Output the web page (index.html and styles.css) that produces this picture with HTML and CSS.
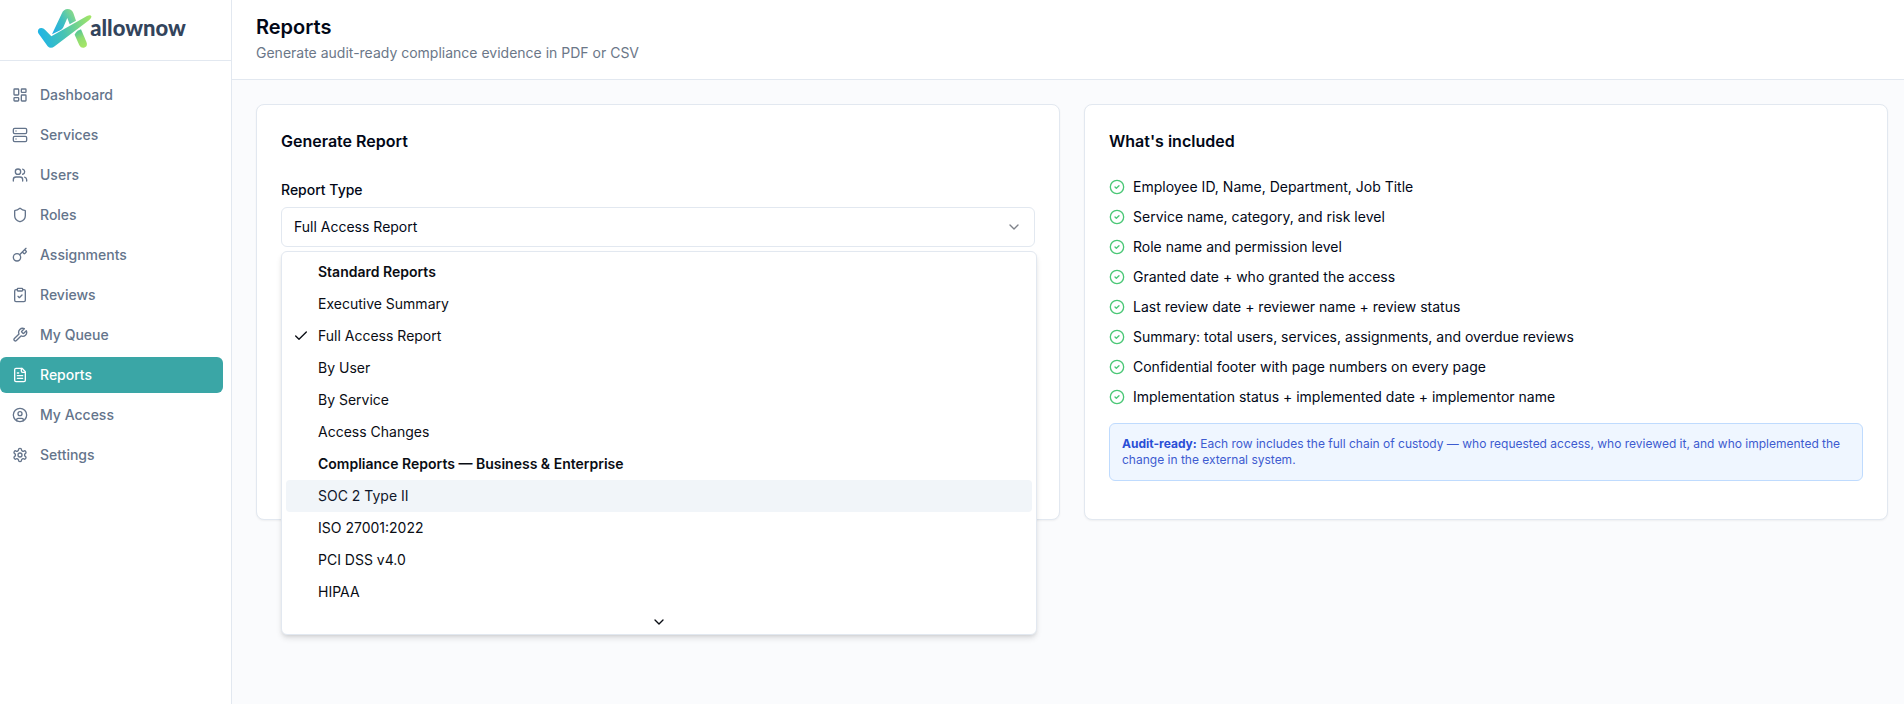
FILE: index.html
```html
<!DOCTYPE html>
<html lang="en">
<head>
<meta charset="utf-8">
<meta name="viewport" content="width=device-width, initial-scale=1">
<title>Reports - allownow</title>
<link rel="stylesheet" href="styles.css">
</head>
<body>
<svg class="defs" width="0" height="0" aria-hidden="true">
  <symbol id="circle-check" viewBox="0 0 24 24"><circle cx="12" cy="12" r="10"/><path d="m9 12 2 2 4-4"/></symbol>
</svg>
<div class="app">
  <aside class="sidebar">
    <a class="brand" href="#">
      <svg class="brand-mark" viewBox="108 24 168 123" aria-hidden="true">
        <defs>
          <linearGradient id="sweep" gradientUnits="userSpaceOnUse" x1="112" y1="100" x2="270" y2="60">
            <stop offset="0" stop-color="#1fb4e6"/><stop offset=".45" stop-color="#46c3b4"/><stop offset="1" stop-color="#a2e566"/>
          </linearGradient>
          <linearGradient id="peak" gradientUnits="userSpaceOnUse" x1="155" y1="90" x2="224" y2="50">
            <stop offset="0" stop-color="#22aee6"/><stop offset=".5" stop-color="#3fbfc0"/><stop offset="1" stop-color="#86d98a"/>
          </linearGradient>
          <linearGradient id="leg" gradientUnits="userSpaceOnUse" x1="225" y1="92" x2="250" y2="140">
            <stop offset="0" stop-color="#4cc49c"/><stop offset=".5" stop-color="#8fdc72"/><stop offset="1" stop-color="#a6e667"/>
          </linearGradient>
        </defs>
        <path fill="url(#peak)" d="M153 103 182 41Q188 27 200 27 212 27 217 39L225 62 206 73 199 54 187 82Q184 88 178 91Z"/>
        <path fill="url(#sweep)" d="M112 100Q108 90 116 85 125 81 132 89L151 109 258 48Q269 43 271 49 273 53 264 61L161 139Q149 148 140 139Z"/>
        <path fill="url(#leg)" d="M221 104Q225 94 240 88L256 125Q261 137 252 142 241 147 235 136Z"/>
      </svg>
      <span class="brand-name">allownow</span>
    </a>
    <nav class="nav" aria-label="Main">
      <a class="nav-link" href="#"><svg class="icon" viewBox="0 0 24 24"><rect width="7" height="9" x="3" y="3" rx="1"/><rect width="7" height="5" x="14" y="3" rx="1"/><rect width="7" height="9" x="14" y="12" rx="1"/><rect width="7" height="5" x="3" y="16" rx="1"/></svg>Dashboard</a>
      <a class="nav-link" href="#"><svg class="icon" viewBox="0 0 24 24"><rect width="20" height="8" x="2" y="2" rx="2"/><rect width="20" height="8" x="2" y="14" rx="2"/><path d="M6 6h.01M6 18h.01"/></svg>Services</a>
      <a class="nav-link" href="#"><svg class="icon" viewBox="0 0 24 24"><path d="M16 21v-2a4 4 0 0 0-4-4H6a4 4 0 0 0-4 4v2"/><circle cx="9" cy="7" r="4"/><path d="M22 21v-2a4 4 0 0 0-3-3.87M16 3.13a4 4 0 0 1 0 7.75"/></svg>Users</a>
      <a class="nav-link" href="#"><svg class="icon" viewBox="0 0 24 24"><path d="M20 13c0 5-3.5 7.5-7.66 8.95a1 1 0 0 1-.67-.01C7.5 20.5 4 18 4 13V6a1 1 0 0 1 1-1c2 0 4.5-1.2 6.24-2.72a1.17 1.17 0 0 1 1.52 0C14.51 3.81 17 5 19 5a1 1 0 0 1 1 1z"/></svg>Roles</a>
      <a class="nav-link" href="#"><svg class="icon" viewBox="0 0 24 24"><path d="m15.5 7.5 2.3 2.3a1 1 0 0 0 1.4 0l2.1-2.1a1 1 0 0 0 0-1.4L19 4M21 2l-9.6 9.6"/><circle cx="7.5" cy="15.5" r="5.5"/></svg>Assignments</a>
      <a class="nav-link" href="#"><svg class="icon" viewBox="0 0 24 24"><rect width="8" height="4" x="8" y="2" rx="1"/><path d="M16 4h2a2 2 0 0 1 2 2v14a2 2 0 0 1-2 2H6a2 2 0 0 1-2-2V6a2 2 0 0 1 2-2h2"/><path d="m9 14 2 2 4-4"/></svg>Reviews</a>
      <a class="nav-link" href="#"><svg class="icon" viewBox="0 0 24 24"><path d="M14.7 6.3a1 1 0 0 0 0 1.4l1.6 1.6a1 1 0 0 0 1.4 0l3.77-3.77a6 6 0 0 1-7.94 7.94l-6.91 6.91a2.12 2.12 0 0 1-3-3l6.91-6.91a6 6 0 0 1 7.94-7.94l-3.76 3.76z"/></svg>My Queue</a>
      <a class="nav-link active" href="#" aria-current="page"><svg class="icon" viewBox="0 0 24 24"><path d="M15 2H6a2 2 0 0 0-2 2v16a2 2 0 0 0 2 2h12a2 2 0 0 0 2-2V7Z"/><path d="M14 2v4a2 2 0 0 0 2 2h4M10 9H8M16 13H8M16 17H8"/></svg>Reports</a>
      <a class="nav-link" href="#"><svg class="icon" viewBox="0 0 24 24"><circle cx="12" cy="12" r="10"/><circle cx="12" cy="10" r="3"/><path d="M7 20.662V19a2 2 0 0 1 2-2h6a2 2 0 0 1 2 2v1.662"/></svg>My Access</a>
      <a class="nav-link" href="#"><svg class="icon" viewBox="0 0 24 24"><path d="M12.22 2h-.44a2 2 0 0 0-2 2v.18a2 2 0 0 1-1 1.73l-.43.25a2 2 0 0 1-2 0l-.15-.08a2 2 0 0 0-2.73.73l-.22.38a2 2 0 0 0 .73 2.73l.15.1a2 2 0 0 1 1 1.72v.51a2 2 0 0 1-1 1.74l-.15.09a2 2 0 0 0-.73 2.73l.22.38a2 2 0 0 0 2.73.73l.15-.08a2 2 0 0 1 2 0l.43.25a2 2 0 0 1 1 1.73V20a2 2 0 0 0 2 2h.44a2 2 0 0 0 2-2v-.18a2 2 0 0 1 1-1.73l.43-.25a2 2 0 0 1 2 0l.15.08a2 2 0 0 0 2.73-.73l.22-.39a2 2 0 0 0-.73-2.73l-.15-.08a2 2 0 0 1-1-1.74v-.5a2 2 0 0 1 1-1.74l.15-.09a2 2 0 0 0 .73-2.73l-.22-.38a2 2 0 0 0-2.73-.73l-.15.08a2 2 0 0 1-2 0l-.43-.25a2 2 0 0 1-1-1.73V4a2 2 0 0 0-2-2z"/><circle cx="12" cy="12" r="3"/></svg>Settings</a>
    </nav>
  </aside>

  <div class="page">
    <header class="page-header">
      <h1>Reports</h1>
      <p>Generate audit-ready compliance evidence in PDF or CSV</p>
    </header>
    <main class="content">
      <section class="card">
        <h2>Generate Report</h2>
        <div class="field">
          <label for="report-type">Report Type</label>
          <div class="select">
            <select id="report-type">
              <option>Executive Summary</option>
              <option selected>Full Access Report</option>
              <option>By User</option>
              <option>By Service</option>
              <option>Access Changes</option>
              <option>SOC 2 Type II</option>
              <option>ISO 27001:2022</option>
              <option>PCI DSS v4.0</option>
              <option>HIPAA</option>
            </select>
            <svg class="icon select-arrow" viewBox="0 0 24 24"><path d="m6 9 6 6 6-6"/></svg>
            <div class="menu">
              <div class="menu-list" role="listbox" aria-label="Report Type">
                <div class="menu-label">Standard Reports</div>
                <div class="menu-item" role="option">Executive Summary</div>
                <div class="menu-item" role="option" aria-selected="true"><span class="menu-tick"><svg class="icon" viewBox="0 0 24 24"><path d="M20 6 9 17l-5-5"/></svg></span>Full Access Report</div>
                <div class="menu-item" role="option">By User</div>
                <div class="menu-item" role="option">By Service</div>
                <div class="menu-item" role="option">Access Changes</div>
                <div class="menu-label">Compliance Reports — Business &amp; Enterprise</div>
                <div class="menu-item highlighted" role="option">SOC 2 Type II</div>
                <div class="menu-item" role="option">ISO 27001:2022</div>
                <div class="menu-item" role="option">PCI DSS v4.0</div>
                <div class="menu-item" role="option">HIPAA</div>
              </div>
              <div class="menu-scroll"><svg class="icon" viewBox="0 0 24 24"><path d="m6 9 6 6 6-6"/></svg></div>
            </div>
          </div>
        </div>
      </section>

      <section class="card">
        <h2>What's included</h2>
        <ul class="included">
          <li><svg class="icon"><use href="#circle-check"/></svg>Employee ID, Name, Department, Job Title</li>
          <li><svg class="icon"><use href="#circle-check"/></svg>Service name, category, and risk level</li>
          <li><svg class="icon"><use href="#circle-check"/></svg>Role name and permission level</li>
          <li><svg class="icon"><use href="#circle-check"/></svg>Granted date + who granted the access</li>
          <li><svg class="icon"><use href="#circle-check"/></svg>Last review date + reviewer name + review status</li>
          <li><svg class="icon"><use href="#circle-check"/></svg>Summary: total users, services, assignments, and overdue reviews</li>
          <li><svg class="icon"><use href="#circle-check"/></svg>Confidential footer with page numbers on every page</li>
          <li><svg class="icon"><use href="#circle-check"/></svg>Implementation status + implemented date + implementor name</li>
        </ul>
        <p class="notice"><strong>Audit-ready:</strong> Each row includes the full chain of custody — who requested access, who reviewed it, and who implemented the change in the external system.</p>
      </section>
    </main>
  </div>
</div>
</body>
</html>
```
FILE: styles.css
```css
* {
  box-sizing: border-box;
}

body {
  margin: 0;
  background: #fafbfd;
  color: #020817;
  font-family: Inter, "Liberation Sans", sans-serif;
  font-size: 14px;
  line-height: 20px;
}

h1, h2, p, ul {
  margin: 0;
  padding: 0;
}

a {
  color: inherit;
  text-decoration: none;
}

.defs {
  position: absolute;
}

.icon {
  display: block;
  flex: none;
  width: 16px;
  height: 16px;
  fill: none;
  stroke: currentColor;
  stroke-width: 2;
  stroke-linecap: round;
  stroke-linejoin: round;
}

.app {
  display: flex;
  min-height: 100vh;
}

/* Sidebar */

.sidebar {
  flex: none;
  width: 232px;
  background: #fff;
  border-right: 1px solid #e2e8f0;
}

.brand {
  display: flex;
  align-items: center;
  justify-content: center;
  height: 61px;
  padding: 0 8px 4px 0;
  border-bottom: 1px solid #e2e8f0;
}

.brand-mark {
  width: 56px;
  height: 41px;
}

.brand-name {
  margin-left: -3px;
  color: #33445c;
  font-family: Lato, "Liberation Sans", sans-serif;
  font-size: 22px;
  font-weight: 900;
  line-height: 24px;
}

.nav {
  display: flex;
  flex-direction: column;
  gap: 4px;
  padding: 16px 8px 16px 0;
}

.nav-link {
  display: flex;
  align-items: center;
  gap: 12px;
  padding: 8px 12px;
  border-radius: 6px;
  color: #64748b;
  font-weight: 500;
}

.nav-link.active {
  background: #3aa6a6;
  color: #fff;
}

/* Page */

.page {
  flex: 1;
  min-width: 0;
}

.page-header {
  padding: 13px 24px 16px;
  background: #fff;
  border-bottom: 1px solid #e2e8f0;
}

.page-header h1 {
  font-size: 20px;
  font-weight: 600;
  line-height: 28px;
}

.page-header p {
  margin-top: 2px;
  color: #6b7788;
}

.content {
  display: grid;
  grid-template-columns: repeat(2, minmax(0, 1fr));
  gap: 24px;
  padding: 24px 16px 24px 24px;
}

.card {
  min-height: 416px;
  padding: 24px;
  background: #fff;
  border: 1px solid #e2e8f0;
  border-radius: 8px;
  box-shadow: 0 1px 2px rgb(0 0 0 / 5%);
}

.card h2 {
  margin-bottom: 24px;
  font-size: 16px;
  font-weight: 600;
  line-height: 24px;
}

/* Report type */

.field label {
  display: block;
  padding: 3px 0 7px;
  font-weight: 500;
}

.select {
  position: relative;
}

.select select {
  display: block;
  appearance: none;
  width: 100%;
  height: 40px;
  padding: 0 36px 0 12px;
  background: #fff;
  border: 1px solid #e2e8f0;
  border-radius: 6px;
  color: inherit;
  font: inherit;
}

.select-arrow {
  position: absolute;
  top: 12px;
  right: 13px;
  opacity: 0.5;
  pointer-events: none;
}

.menu {
  position: absolute;
  z-index: 10;
  top: calc(100% + 4px);
  left: 0;
  right: -2px;
  background: #fff;
  border: 1px solid #e2e8f0;
  border-radius: 6px;
  box-shadow: 0 4px 6px -1px rgb(0 0 0 / 12%), 0 2px 4px -2px rgb(0 0 0 / 12%);
  color: #0a0d14;
}

.menu-list {
  padding: 4px 4px 2px;
}

.menu-label,
.menu-item {
  position: relative;
  padding: 6px 8px 6px 32px;
  border-radius: 4px;
}

.menu-label {
  font-weight: 600;
}

.menu-item.highlighted {
  background: #f1f5f9;
  color: #0f172a;
}

.menu-tick {
  position: absolute;
  top: 8px;
  left: 7px;
}

.menu-scroll {
  display: flex;
  justify-content: center;
  padding: 4px 0;
}

/* What's included */

.included {
  display: grid;
  gap: 10px;
  list-style: none;
}

.included li {
  display: flex;
  align-items: center;
  gap: 8px;
}

.included .icon {
  color: #4ac776;
}

.notice {
  margin-top: 16px;
  padding: 12px;
  background: #eff6ff;
  border: 1px solid #bfdbfe;
  border-radius: 6px;
  color: #3d5bd0;
  font-size: 12px;
  line-height: 16px;
}

.notice strong {
  color: #2a4fd6;
  font-weight: 700;
}
```
